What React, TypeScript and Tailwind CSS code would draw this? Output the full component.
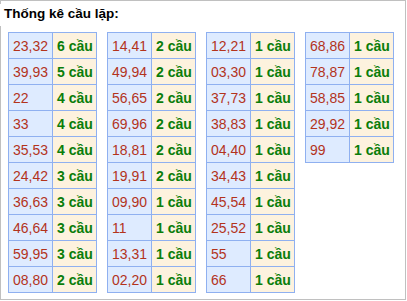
import React from "react";

type Row = [string, string];

const tables: Row[][] = [
  [
    ["23,32", "6"],
    ["39,93", "5"],
    ["22", "4"],
    ["33", "4"],
    ["35,53", "4"],
    ["24,42", "3"],
    ["36,63", "3"],
    ["46,64", "3"],
    ["59,95", "3"],
    ["08,80", "2"],
  ],
  [
    ["14,41", "2"],
    ["49,94", "2"],
    ["56,65", "2"],
    ["69,96", "2"],
    ["18,81", "2"],
    ["19,91", "2"],
    ["09,90", "1"],
    ["11", "1"],
    ["13,31", "1"],
    ["02,20", "1"],
  ],
  [
    ["12,21", "1"],
    ["03,30", "1"],
    ["37,73", "1"],
    ["38,83", "1"],
    ["04,40", "1"],
    ["34,43", "1"],
    ["45,54", "1"],
    ["25,52", "1"],
    ["55", "1"],
    ["66", "1"],
  ],
  [
    ["68,86", "1"],
    ["78,87", "1"],
    ["58,85", "1"],
    ["29,92", "1"],
    ["99", "1"],
  ],
];

export default function App() {
  return (
    <div
      className="w-[406px] h-[300px] border border-[#c0c0c0] bg-white"
      style={{ fontFamily: '"Liberation Sans", Arial, sans-serif' }}
    >
      <div className="relative -ml-px -mt-px inline-block bg-white pl-[4px] pr-[6px] pt-[2px] h-[22px] text-[13.5px] leading-[16px] font-bold text-black">
        Thống kê cầu lặp:
      </div>
      <div className="flex items-start gap-[10px] pl-[7px] mt-[6px]">
        {tables.map((rows, ti) => (
          <table key={ti} className="border-collapse">
            <tbody>
              {rows.map(([num, count], ri) => (
                <tr key={ri}>
                  <td className="w-[44px] h-[26px] border border-[#8fb0f0] bg-[#deebff] pl-[4px] p-0 text-[14px] text-[#b3331c] leading-[16px]">
                    {num}
                  </td>
                  <td className="w-[44px] h-[26px] border border-[#8fb0f0] bg-[#fdf2de] pl-[4px] p-0 text-[14px] font-bold text-[#0a7d0a] leading-[16px] whitespace-nowrap">
                    {count} cầu
                  </td>
                </tr>
              ))}
            </tbody>
          </table>
        ))}
      </div>
    </div>
  );
}
